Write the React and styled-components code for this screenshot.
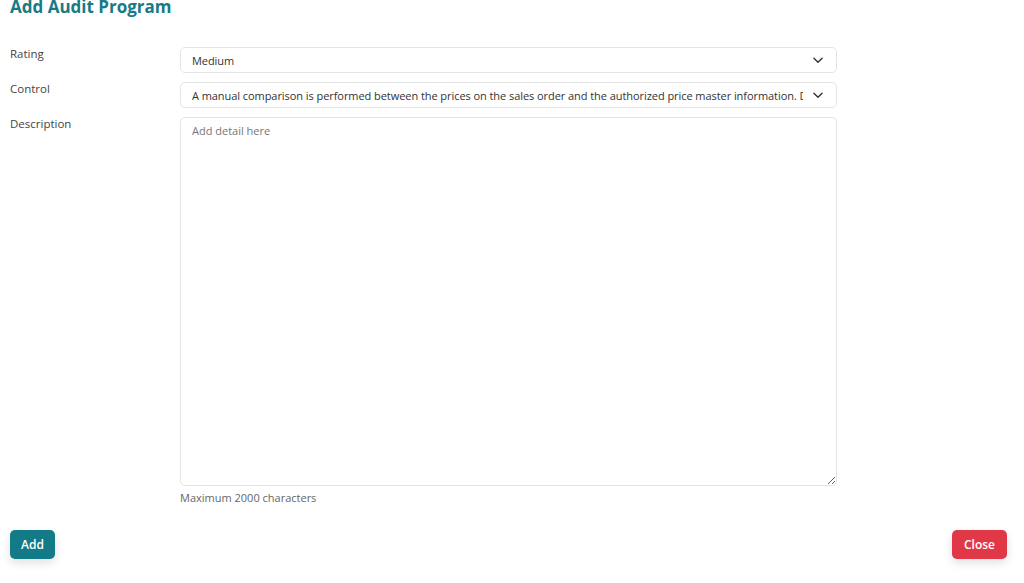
import React from 'react';
import styled, { createGlobalStyle } from 'styled-components';

const GlobalStyle = createGlobalStyle`
  body {
    margin: 0;
    background: #fff;
    font-family: "Open Sans", "Liberation Sans", sans-serif;
  }
`;

function Chevron() {
  return (
    <svg width="14" height="14" viewBox="0 0 24 24" fill="none" stroke="#333" strokeWidth="2.4" strokeLinecap="round" strokeLinejoin="round">
      <path d="M5 9l7 7 7-7" />
    </svg>
  );
}

function App() {
  return (
    <Page>
      <GlobalStyle />
      <Title>Add Audit Program</Title>
      <Form>
        <Label>Rating</Label>
        <Select>
          <SelectText>Medium</SelectText>
          <Chevron />
        </Select>
        <Label>Control</Label>
        <Select>
          <SelectText>A manual comparison is performed between the prices on the sales order and the authorized price master information. Discrepancies are investigated</SelectText>
          <Chevron />
        </Select>
        <Label>Description</Label>
        <div>
          <TextArea placeholder="Add detail here" />
          <Hint>Maximum 2000 characters</Hint>
        </div>
      </Form>
      <Footer>
        <Button $variant="primary">Add</Button>
        <Button $variant="danger">Close</Button>
      </Footer>
    </Page>
  );
}

const Page = styled.div`
  padding: 0 17px 0 10px;
  height: 583px;
  box-sizing: border-box;
  display: flex;
  flex-direction: column;
`;

const Title = styled.h1`
  margin: -3px 0 0;
  font-size: 17px;
  line-height: 20px;
  font-weight: 700;
  color: #187a86;
`;

const Form = styled.div`
  display: grid;
  grid-template-columns: 170px 657px;
  row-gap: 9px;
  margin-top: 30px;
  align-items: start;
`;

const Label = styled.div`
  font-size: 11.5px;
  color: #444;
  padding-top: 0;
  line-height: 14px;
`;

const Select = styled.div`
  height: 26px;
  box-sizing: border-box;
  border: 1px solid #e4e4e4;
  border-radius: 5px;
  display: flex;
  align-items: center;
  gap: 8px;
  padding: 0 11px;
  svg { flex-shrink: 0; }
`;

const SelectText = styled.span`
  flex: 1;
  min-width: 0;
  white-space: nowrap;
  overflow: hidden;
  font-size: 11px;
  letter-spacing: -0.06px;
  color: #333;
`;

const TextArea = styled.textarea`
  display: block;
  width: 100%;
  height: 369px;
  box-sizing: border-box;
  border: 1px solid #e4e4e4;
  border-radius: 5px;
  padding: 5px 11px;
  font-family: inherit;
  font-size: 11px;
  outline: none;
  &::placeholder { color: #777; }
`;

const Hint = styled.div`
  margin-top: 4px;
  font-size: 11px;
  color: #666;
`;

const Footer = styled.div`
  display: flex;
  justify-content: space-between;
  margin-top: 25px;
`;

const Button = styled.button`
  height: 29px;
  padding: 0 ${p => (p.$variant === 'danger' ? '12px' : '11px')};
  border: none;
  border-radius: 5px;
  font-family: inherit;
  font-size: 12px;
  font-weight: 600;
  color: #fff;
  background: ${p => (p.$variant === 'danger' ? '#e13848' : '#137a87')};
  box-shadow: 0 4px 10px rgba(0, 0, 0, 0.12);
`;

export default App;
